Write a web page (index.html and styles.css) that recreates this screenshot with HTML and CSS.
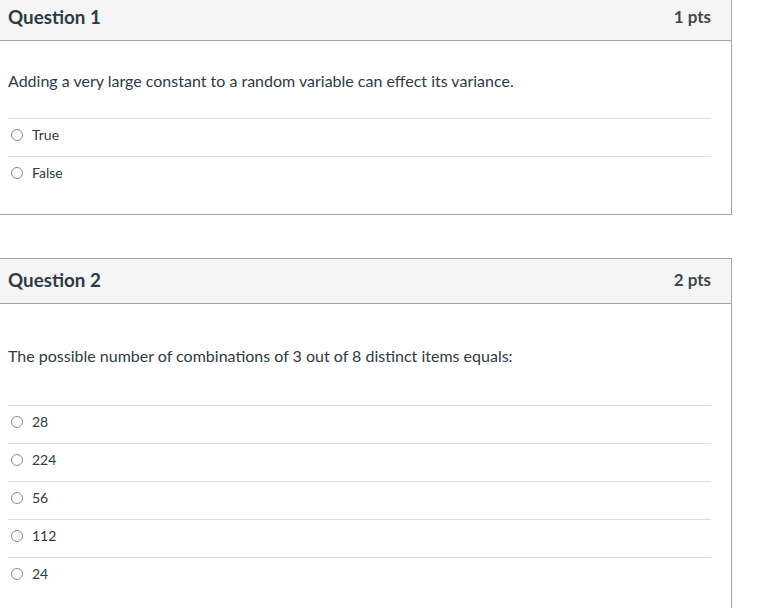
FILE: index.html
```html
<!DOCTYPE html>
<html>
<head>
<meta charset="utf-8">
<link rel="stylesheet" href="styles.css">
</head>
<body>
<div class="quiz">
  <section class="card card-first">
    <header class="card-head">
      <h2 class="q-title">Question 1</h2>
      <span class="q-pts">1 pts</span>
    </header>
    <div class="card-body">
      <div class="q-text">Adding a very large constant to a random variable can effect its variance.</div>
      <div class="answers">
        <label class="answer"><span class="radio"></span><span class="a-label">True</span></label>
        <label class="answer"><span class="radio"></span><span class="a-label">False</span></label>
      </div>
    </div>
  </section>

  <section class="card">
    <header class="card-head">
      <h2 class="q-title">Question 2</h2>
      <span class="q-pts">2 pts</span>
    </header>
    <div class="card-body">
      <div class="q-text"><p class="q-para">The possible number of combinations of 3 out of 8 distinct items equals:</p></div>
      <div class="answers">
        <label class="answer"><span class="radio"></span><span class="a-label">28</span></label>
        <label class="answer"><span class="radio"></span><span class="a-label">224</span></label>
        <label class="answer"><span class="radio"></span><span class="a-label">56</span></label>
        <label class="answer"><span class="radio"></span><span class="a-label">112</span></label>
        <label class="answer"><span class="radio"></span><span class="a-label">24</span></label>
      </div>
    </div>
  </section>
</div>
</body>
</html>
```

FILE: styles.css
```css
html, body {
  margin: 0;
  padding: 0;
  background: #ffffff;
}

body {
  font-family: Lato, "Open Sans", "Liberation Sans", sans-serif;
  color: #2d3b45;
}

.quiz {
  display: flex;
  flex-direction: column;
  gap: 43px;
  width: 733px;
  margin-left: -1px;
  margin-top: -5px;
}

.card {
  border: 1px solid #a5a5a5;
  background: #ffffff;
}

.card-head {
  display: flex;
  align-items: center;
  justify-content: space-between;
  height: 44px;
  padding: 0 20px 0 8px;
  background: #f5f5f5;
  border-bottom: 1px solid #a5a5a5;
}

.q-title {
  margin: 0;
  margin-top: -2px;
  font-size: 18.8px;
  font-weight: 700;
  line-height: 24px;
}

.q-pts {
  font-size: 17px;
  font-weight: 700;
  line-height: 24px;
  color: #3d4850;
  margin-top: -2px;
}

.card-body {
  padding: 28px 20px 20px 8px;
}

.q-text {
  display: flow-root;
  font-size: 16px;
  line-height: 24px;
  margin-bottom: 25px;
}

.q-para {
  margin: 12px 0;
}

.answers {
  display: flex;
  flex-direction: column;
}

.answer {
  display: flex;
  align-items: center;
  height: 37px;
  padding-left: 3px;
  border-top: 1px solid #dcdcdc;
  box-sizing: content-box;
  font-size: 14px;
}

.radio {
  width: 10px;
  height: 10px;
  border: 1px solid #8a8a8a;
  border-radius: 50%;
  margin-right: 9px;
  margin-top: -5px;
  flex: none;
}

.a-label {
  line-height: 20px;
  margin-top: -5px;
}
```
